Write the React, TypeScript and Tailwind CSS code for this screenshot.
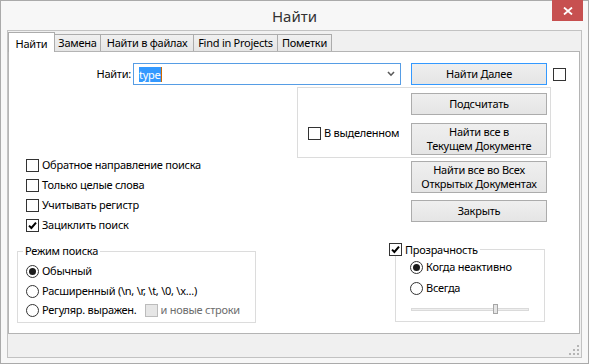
import React from 'react'

function Check({ checked, disabled }: { checked?: boolean; disabled?: boolean }) {
  return (
    <span
      className={`w-[13px] h-[13px] border flex items-center justify-center shrink-0 ${
        disabled ? 'border-[#bcbcbc] bg-[#e6e6e6]' : 'border-[#333333] bg-white'
      }`}
    >
      {checked && (
        <svg width="9" height="9" viewBox="0 0 9 9">
          <path d="M1 4.6 L3.4 7 L8 1.6" stroke="#000" strokeWidth="2" fill="none" />
        </svg>
      )}
    </span>
  )
}

function Radio({ checked }: { checked?: boolean }) {
  return (
    <span className="w-[13px] h-[13px] rounded-full border border-[#333333] bg-white flex items-center justify-center shrink-0">
      {checked && <span className="w-[7px] h-[7px] rounded-full bg-[#1b1b1b]" />}
    </span>
  )
}

function Btn({ children, h, isDefault }: any) {
  return (
    <div
      className={`w-[136px] ${h} flex items-center justify-center text-center leading-[14px] border bg-linear-to-b from-[#efefef] to-[#e5e5e5] ${
        isDefault ? 'border-[#3399ff]' : 'border-[#acacac]'
      }`}
    >
      {children}
    </div>
  )
}

function Row({ children }: any) {
  return <div className="h-[13px] flex items-center gap-[3px] whitespace-nowrap">{children}</div>
}

const tabs = [
  { label: 'Замена', w: 'w-[46px]' },
  { label: 'Найти в файлах', w: 'w-[93px]' },
  { label: 'Find in Projects', w: 'w-[84px]' },
  { label: 'Пометки', w: 'w-[54px]' },
]

export default function App() {
  return (
    <div className="w-[589px] h-[364px] bg-[#f7f7f7] border border-[#aaaaaa] flex flex-col text-[11px] tracking-[-0.25px] text-black font-['Noto_Sans',sans-serif] select-none">
      {/* title bar */}
      <div className="h-[29px] grid grid-cols-[1fr_auto_1fr] items-start shrink-0">
        <div />
        <div className="text-[15px] tracking-normal text-[#333333] pt-[5px] leading-[20px]">Найти</div>
        <div className="flex justify-end pr-[5px] -mt-[1px]">
          <div className="w-[31px] h-[21px] bg-[#c75050] flex items-center justify-center">
            <svg width="10" height="8" viewBox="0 0 10 8">
              <path d="M1 0.5 L9 7.5 M9 0.5 L1 7.5" stroke="#fff" strokeWidth="1.8" />
            </svg>
          </div>
        </div>
      </div>

      {/* client */}
      <div className="mx-[6px] mb-[5px] flex-1 border border-[#c2c2c2] bg-[#f0f0f0] flex flex-col">
        {/* tabs */}
        <div className="h-[20px] flex items-end shrink-0">
          <div className="h-[20px] w-[47px] text-center pt-[3px] bg-white border border-b-0 border-[#acacac] relative z-10 -mb-[1px]">
            Найти
          </div>
          {tabs.map((t) => (
            <div
              key={t.label}
              className={`${t.w} h-[17px] text-center border border-l-0 border-b-0 border-[#acacac] bg-linear-to-b from-[#f0f0f0] to-[#e5e5e5] leading-[16px] whitespace-nowrap`}
            >
              {t.label}
            </div>
          ))}
        </div>

        {/* page */}
        <div className="w-[572px] h-[283px] bg-white border border-[#b4b4b4] flex flex-col">
          {/* row 1 */}
          <div className="mt-[11px] flex items-center h-[22px]">
            <div className="w-[122px] text-right">Найти:</div>
            <div className="ml-[2px] w-[268px] h-[22px] border border-[#569de5] flex items-center pl-[5px] pr-[5px]">
              <span className="bg-[#3399ff] text-white leading-[15px] h-[15px]">type</span>
              <span className="w-[1px] h-[15px] bg-[#cc6a00]" />
              <span className="flex-1" />
              <svg width="8" height="6" viewBox="0 0 8 6">
                <path d="M1 1 L4 4.2 L7 1" stroke="#5a5a5a" strokeWidth="1.6" fill="none" />
              </svg>
            </div>
            <div className="ml-[10px]">
              <Btn h="h-[22px]" isDefault>
                Найти Далее
              </Btn>
            </div>
            <div className="ml-[6px]">
              <Check />
            </div>
          </div>

          {/* row 2: selection group */}
          <div className="mt-[2px] ml-[288px] w-[254px] h-[71px] border border-[#dcdcdc] flex">
            <div className="w-[113px] pl-[10px] pt-[39px]">
              <Row>
                <Check />
                <span>В выделенном</span>
              </Row>
            </div>
            <div className="pt-[5px] flex flex-col gap-[8px]">
              <Btn h="h-[22px]">Подсчитать</Btn>
              <Btn h="h-[32px]">
                Найти все в<br />
                Текущем Документе
              </Btn>
            </div>
          </div>

          {/* row 3: options + buttons */}
          <div className="h-[85px] flex">
            <div className="w-[402px] pl-[17px] pt-[1px] flex flex-col gap-[7px]">
              <Row>
                <Check />
                <span>Обратное направление поиска</span>
              </Row>
              <Row>
                <Check />
                <span>Только целые слова</span>
              </Row>
              <Row>
                <Check />
                <span>Учитывать регистр</span>
              </Row>
              <Row>
                <Check checked />
                <span>Зациклить поиск</span>
              </Row>
            </div>
            <div className="pt-[3px] flex flex-col gap-[7px]">
              <Btn h="h-[32px]">
                Найти все во Всех
                <br />
                Открытых Документах
              </Btn>
              <Btn h="h-[22px]">Закрыть</Btn>
            </div>
          </div>

          {/* row 4: groups */}
          <div className="flex items-start">
            <fieldset className="ml-[8px] w-[239px] min-w-0 h-[80px] border border-[#dcdcdc]">
              <legend className="ml-[5px] px-[2px] leading-[16px]">Режим поиска</legend>
              <div className="pl-[8px] pt-[6px] flex flex-col gap-[6.5px]">
                <Row>
                  <Radio checked />
                  <span>Обычный</span>
                </Row>
                <Row>
                  <Radio />
                  <span>Расширенный (\n, \r, \t, \0, \x...)</span>
                </Row>
                <Row>
                  <Radio />
                  <span>Регуляр. выражен.</span>
                  <span className="ml-[5px]">
                    <Check disabled />
                  </span>
                  <span className="text-[#6d6d6d]">и новые строки</span>
                </Row>
              </div>
            </fieldset>

            <fieldset className="ml-[139px] w-[150px] min-w-0 h-[79px] border border-[#dcdcdc]">
              <legend className="-ml-[7px] pr-[2px] leading-[16px] bg-white">
                <Row>
                  <Check checked />
                  <span>Прозрачность</span>
                </Row>
              </legend>
              <div className="pl-[14px] pt-[5px] flex flex-col gap-[8px]">
                <Row>
                  <Radio checked />
                  <span>Когда неактивно</span>
                </Row>
                <Row>
                  <Radio />
                  <span>Всегда</span>
                </Row>
                <div className="relative ml-[1px] mt-[1px] w-[118px] h-[11px] flex items-center">
                  <div className="w-full h-[3px] bg-[#eeeeee] border border-[#dadada]" />
                  <div className="absolute left-[82px] top-0 w-[5px] h-[10px] bg-[#e5e5e5] border border-[#a6a6a6]" />
                </div>
              </div>
            </fieldset>
          </div>
        </div>

        {/* bottom strip with size grip */}
        <div className="flex-1 flex justify-end items-end pr-[2px] pb-[2px]">
          <svg width="10" height="10" viewBox="0 0 10 10">
            <rect x="8" y="0" width="2" height="2" fill="#b5b5b5" />
            <rect x="4" y="4" width="2" height="2" fill="#b5b5b5" />
            <rect x="8" y="4" width="2" height="2" fill="#b5b5b5" />
            <rect x="0" y="8" width="2" height="2" fill="#b5b5b5" />
            <rect x="4" y="8" width="2" height="2" fill="#b5b5b5" />
            <rect x="8" y="8" width="2" height="2" fill="#b5b5b5" />
          </svg>
        </div>
      </div>
    </div>
  )
}
